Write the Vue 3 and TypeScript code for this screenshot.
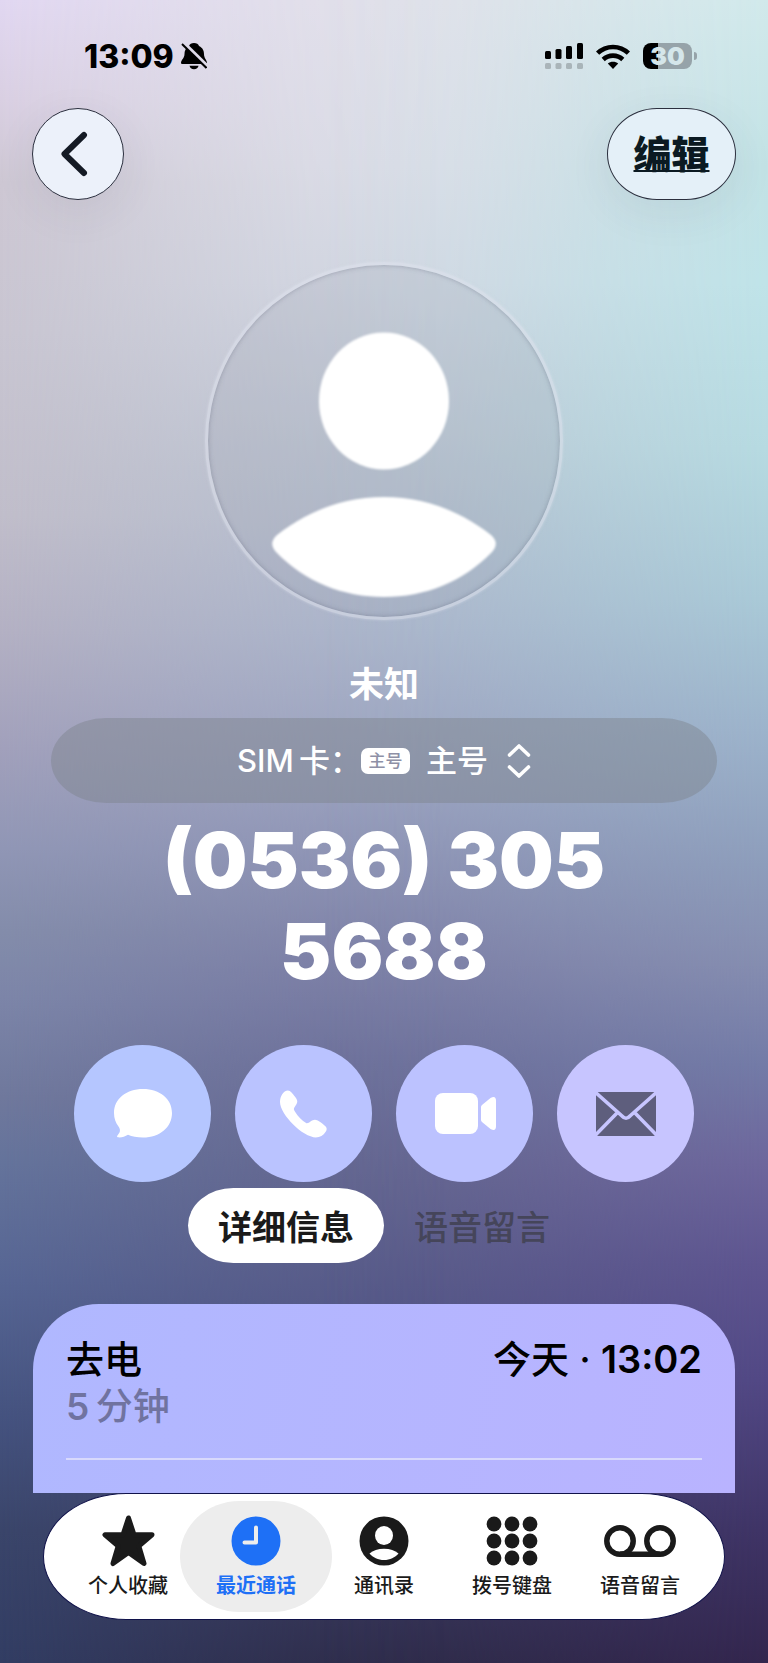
<script setup lang="ts">
import { ref } from 'vue'

interface NavItem {
  id: string
  label: string
}

const tabs: NavItem[] = [
  { id: 'details', label: '详细信息' },
  { id: 'voicemail', label: '语音留言' },
]

const navItems: NavItem[] = [
  { id: 'favorites', label: '个人收藏' },
  { id: 'recents', label: '最近通话' },
  { id: 'contacts', label: '通讯录' },
  { id: 'keypad', label: '拨号键盘' },
  { id: 'voicemail', label: '语音留言' },
]

const keypadDots = [8, 26, 44].flatMap((x) => [8, 25, 42].map((y) => ({ x, y })))

const activeTab = ref('details')
const activeNav = ref('recents')
const sim = ref('main')
</script>

<template>
  <div class="screen">
    <div class="status">
      <div class="status-left">
        <span class="clock">13:09</span>
        <svg width="26" height="28" viewBox="0 0 26 28" aria-hidden="true">
          <mask id="bell-gap">
            <rect width="26" height="28" fill="#fff" />
            <path d="M1.500 0 28 26" stroke="#000" stroke-width="4" />
          </mask>
          <g mask="url(#bell-gap)">
            <path d="M13 1C15.500 1 17.500 2 18 4C22 6 23 9 23 12C23 16 25.500 17.500 26 20.500C26 21.600 25.500 22 24.500 22H1.500C.5 22 0 21.600 0 20.500C.5 17.500 3.500 16 3.500 12C3.500 9 4.500 6 8 4C8.500 2 10.500 1 13 1Z" />
            <path d="M8.500 23.800H17.500C17 26 15.500 27.200 13 27.200S9 26 8.500 23.800Z" />
          </g>
          <path d="M1 2 25.500 26" stroke="#000" stroke-width="2" />
        </svg>
      </div>
      <div class="status-right">
        <svg width="38" height="26" viewBox="0 0 38 26" aria-hidden="true">
          <rect x="0" y="8" width="6" height="8" rx="1.500" />
          <rect x="10.500" y="6" width="6" height="10" rx="1.500" />
          <rect x="21" y="3" width="6" height="13" rx="1.500" />
          <rect x="32" y="0" width="6" height="16" rx="1.500" />
          <g opacity="0.2">
            <rect x="0" y="20" width="6" height="6" rx="1.500" />
            <rect x="10.500" y="20" width="6" height="6" rx="1.500" />
            <rect x="21" y="20" width="6" height="6" rx="1.500" />
            <rect x="32" y="20" width="6" height="6" rx="1.500" />
          </g>
        </svg>
        <svg width="34" height="25" viewBox="0 0 34 25" aria-hidden="true">
          <g fill="none" stroke="#000" stroke-width="4.600">
            <path d="M1.600 9.200C10 .9 24 .9 32.400 9.200" />
            <path d="M7.200 15.500C12.700 10.300 21.300 10.300 26.800 15.500" />
          </g>
          <path d="M17 25 11.800 19.600C14.500 17 19.500 17 22.200 19.600Z" />
        </svg>
        <div class="battery"><span class="battery-body">30</span><span class="battery-tip"></span></div>
      </div>
    </div>

    <header class="header">
      <button class="glass back" type="button" aria-label="返回">
        <svg width="28" height="46" viewBox="0 0 28 46" aria-hidden="true">
          <path d="M24 4 4.500 23 24 42" fill="none" stroke="#141a24" stroke-width="6" stroke-linecap="round" stroke-linejoin="round" />
        </svg>
      </button>
      <button class="glass edit" type="button">编辑</button>
    </header>

    <main class="main">
      <div class="avatar">
        <svg width="230" height="290" viewBox="0 0 230 290" aria-hidden="true">
          <ellipse cx="115" cy="104" rx="65" ry="68.500" fill="#fff" />
          <path d="M8 238C40 213 76 200 115 200S190 213 222 238Q231 246 223 255C194 285 156 300 115 300S36 285 7 255Q-1 246 8 238Z" fill="#fff" />
        </svg>
      </div>

      <h1 class="name">未知</h1>

      <div class="sim">
        <label for="sim">SIM&thinsp;卡：</label>
        <span class="sim-badge">主号</span>
        <select id="sim" v-model="sim" class="sim-select">
          <option value="main">主号</option>
        </select>
        <svg width="24" height="34" viewBox="0 0 24 34" aria-hidden="true">
          <path d="M2.500 11 12 2 21.500 11M2.500 23 12 32 21.500 23" fill="none" stroke="#fff" stroke-width="3.600" stroke-linecap="round" stroke-linejoin="round" />
        </svg>
      </div>

      <p class="phone">(0536) 305 5688</p>

      <div class="actions">
        <button class="action action-message" type="button" aria-label="信息">
          <svg width="58" height="50" viewBox="0 0 58 50" aria-hidden="true">
            <path d="M29 0C46 0 58 10 58 24S46 48.500 29 48.500C23 48.500 18 47.500 14 45.800C11 47.600 7 48.800 4 48.300C2.600 48 3 46.800 3.800 46C6 43.500 7 41 4.500 37.500C1.500 34 0 29 0 24C0 10 12 0 29 0Z" fill="#fff" />
          </svg>
        </button>
        <button class="action action-call" type="button" aria-label="呼叫">
          <svg width="47" height="48" viewBox="0 0 142 144" aria-hidden="true">
            <path d="M24 1C32 1 38 10 46 21C56 34 53 38 43 53C41 57 42 60 46 66C54 80 66 92 80 100C84 101 88 98 92 95C100 89 106 87 114 92C122 97 132 104 138 110C143 115 141 121 138 126C131 137 121 143 108 143C90 143 60 125 40 104C18 82 0 56 0 36C0 18 10 2 24 1Z" fill="#fff" />
          </svg>
        </button>
        <button class="action action-video" type="button" aria-label="视频">
          <svg width="62" height="42" viewBox="0 0 62 42" aria-hidden="true">
            <rect x="1" width="43" height="41" rx="8" fill="#fff" />
            <path d="M48 12 56.500 5Q62 2 62 8V33Q62 39 56.500 36L48 29Q47 28 47 27V14Q47 13 48 12Z" fill="#fff" />
          </svg>
        </button>
        <button class="action action-mail" type="button" aria-label="邮件">
          <svg width="60" height="44" viewBox="0 0 60 44" aria-hidden="true">
            <rect width="60" height="44" rx="2" fill="#5e5e7d" />
            <path d="M-1 0 26 24Q30 28.500 34 24L61 0M-1 43.500 21 21M61 43.500 39 21" fill="none" stroke="#c7c5ff" stroke-width="3.600" />
          </svg>
        </button>
      </div>

      <div class="tabs" role="tablist">
        <button
          v-for="tab in tabs"
          :key="tab.id"
          type="button"
          role="tab"
          class="tab"
          :class="{ 'tab-active': activeTab === tab.id }"
          :aria-selected="activeTab === tab.id"
          @click="activeTab = tab.id"
        >
          {{ tab.label }}
        </button>
      </div>

      <section class="card">
        <div class="call">
          <div class="call-head">
            <span>去电</span>
            <span>今天 · <span class="digits">13:02</span></span>
          </div>
          <div class="call-length"><span class="digits">5</span>&thinsp;分钟</div>
        </div>
      </section>
    </main>

    <nav class="nav">
      <button
        v-for="item in navItems"
        :key="item.id"
        type="button"
        class="nav-item"
        :class="{ 'nav-active': activeNav === item.id }"
        @click="activeNav = item.id"
      >
        <span class="nav-icon">
          <svg v-if="item.id === 'favorites'" width="53" height="52" viewBox="0 0 53 52" aria-hidden="true">
            <path d="M26.500 3 32 19.800H50L36.800 31 42 48.500 26.500 37.500 11 48.500 16.200 31 3 19.800H21Z" fill="currentColor" stroke="currentColor" stroke-width="5" stroke-linejoin="round" />
          </svg>
          <svg v-else-if="item.id === 'recents'" width="50" height="50" viewBox="0 0 50 50" aria-hidden="true">
            <circle cx="25" cy="25" r="24.500" fill="currentColor" />
            <path d="M25 11.500V26.500H13.500" fill="none" stroke="#ededed" stroke-width="4" stroke-linecap="round" stroke-linejoin="round" />
          </svg>
          <svg v-else-if="item.id === 'contacts'" width="50" height="50" viewBox="0 0 50 50" aria-hidden="true">
            <circle cx="25" cy="25" r="24.500" fill="currentColor" />
            <ellipse cx="25" cy="19.500" rx="9" ry="9.500" fill="#fff" />
            <path d="M10.500 37.500C14 34.500 19 32.800 25 32.800S36 34.500 39.500 37.500C36 41.500 31 44 25 44S14 41.500 10.500 37.500Z" fill="#fff" />
          </svg>
          <svg v-else-if="item.id === 'keypad'" width="52" height="50" viewBox="0 0 52 50" aria-hidden="true">
            <circle v-for="dot in keypadDots" :key="`${dot.x}-${dot.y}`" :cx="dot.x" :cy="dot.y" r="7.400" fill="currentColor" />
          </svg>
          <svg v-else width="72" height="32" viewBox="0 0 72 32" aria-hidden="true">
            <g fill="none" stroke="currentColor" stroke-width="5.500">
              <circle cx="16" cy="16" r="13.200" />
              <circle cx="56" cy="16" r="13.200" />
              <path d="M16 29.200H56" />
            </g>
          </svg>
        </span>
        <span class="nav-label">{{ item.label }}</span>
      </button>
    </nav>
  </div>
</template>

<style>
html,
body {
  margin: 0;
}
</style>

<style scoped>
* {
  box-sizing: border-box;
}

.screen {
  position: relative;
  z-index: 0;
  min-height: 100vh;
  padding-bottom: 43px;
  overflow: hidden;
  font-family: Inter, 'Noto Sans CJK SC', sans-serif;
  color: #fff;
  background: linear-gradient(
    180deg,
    #e2e1ea 0%,
    #dcdee8 10%,
    #d3d8e3 17%,
    #bcc5d3 28%,
    #abb5cb 38%,
    #989fbd 48%,
    #7d80a7 58%,
    #6e719b 64%,
    #63658f 71%,
    #555887 79%,
    #404169 90%,
    #2f2d4b 100%
  );
}

.screen::before,
.screen::after {
  content: '';
  position: absolute;
  inset: 0;
  z-index: -1;
}

.screen::before {
  background: linear-gradient(
    180deg,
    #e1d7f1 0%,
    #d9cfe2 6%,
    #cdc7d3 11%,
    #c8c5d1 20%,
    #c0bdca 31%,
    #b3b0c3 38%,
    #a1a0bb 45%,
    #9096b5 51%,
    #838caa 56%,
    #7c85a8 60%,
    #6f789c 66%,
    #64739b 70%,
    #566593 77%,
    #455380 85%,
    #3a456a 92%,
    #323d63 100%
  );
  mask-image: linear-gradient(90deg, #000 0%, rgba(0, 0, 0, 0.5) 22%, rgba(0, 0, 0, 0.15) 40%, transparent 58%);
}

.screen::after {
  background: linear-gradient(
    180deg,
    #d1e9eb 0%,
    #c2e2e5 10%,
    #bfe3e8 17%,
    #b6dae1 27%,
    #a9c9d7 36%,
    #9cb3cb 44%,
    #8d9dbb 52%,
    #858db0 58%,
    #737ba7 64%,
    #6d669c 70%,
    #5e5590 76%,
    #524885 83%,
    #3f3466 92%,
    #33264e 100%
  );
  mask-image: linear-gradient(270deg, #000 0%, rgba(0, 0, 0, 0.6) 22%, rgba(0, 0, 0, 0.2) 40%, transparent 58%);
}

button,
select {
  margin: 0;
  padding: 0;
  border: 0;
  font: inherit;
  color: inherit;
  cursor: pointer;
}

svg {
  display: block;
  flex: none;
}

.status {
  display: flex;
  justify-content: space-between;
  align-items: center;
  padding: 32px 71px 28px 84px;
  color: #000;
}

.status-left,
.status-right {
  display: flex;
  align-items: center;
  height: 48px;
}

.status-left {
  gap: 7px;
}

.status-right {
  gap: 13px;
}

.clock {
  font-size: 32px;
  font-weight: 800;
}

.battery {
  display: flex;
  align-items: center;
  gap: 2px;
}

.battery-body {
  width: 49px;
  height: 26px;
  border-radius: 8px;
  background: linear-gradient(90deg, #000 31%, #96a3a9 31%);
  color: #d5e6ea;
  font-size: 25px;
  line-height: 27px;
  font-weight: 900;
  text-align: center;
}

.battery-tip {
  width: 3px;
  height: 8px;
  border-radius: 0 4px 4px 0;
  background: #96a3a9;
}

.header {
  display: flex;
  justify-content: space-between;
  padding: 0 32px;
}

.glass {
  display: flex;
  align-items: center;
  justify-content: center;
  height: 92px;
  border: 1px solid #2b2f3e;
  border-radius: 46px;
  background: #ecf1fa;
  box-shadow: 0 12px 44px rgba(60, 70, 90, 0.08);
}

.back {
  width: 92px;
  padding-right: 8px;
}

.edit {
  width: 129px;
  padding-bottom: 5px;
  border-radius: 50px / 46px;
  background: #e4f0f8;
  color: #0b1a22;
  font-size: 38px;
  font-weight: 900;
  text-decoration: underline;
  text-decoration-thickness: 2px;
  text-decoration-skip-ink: none;
  text-underline-offset: 2px;
}

.main {
  display: flex;
  flex-direction: column;
  align-items: center;
  padding: 62px 33px 0;
}

.avatar {
  display: flex;
  justify-content: center;
  width: 358px;
  height: 358px;
  padding-top: 32px;
  border: 3px solid rgba(222, 226, 236, 0.55);
  border-radius: 50%;
  background: rgba(150, 155, 170, 0.2);
  background-clip: padding-box;
  box-shadow: inset 0 0 5px rgba(90, 95, 115, 0.4), 0 0 3px rgba(225, 230, 240, 0.5);
}

.avatar svg {
  overflow: visible;
  filter: blur(1px);
}

.name {
  margin: 42px 0 12px;
  font-size: 35px;
  line-height: 44px;
  font-weight: 700;
}

.sim {
  display: flex;
  align-items: center;
  align-self: stretch;
  justify-content: center;
  height: 85px;
  margin: 0 18px;
  border-radius: 56px / 43px;
  background: rgba(125, 130, 140, 0.45);
  font-size: 31px;
  line-height: 44px;
  font-weight: 500;
}

.sim-badge {
  width: 49px;
  height: 26px;
  margin-right: 16px;
  border-radius: 7px;
  background: #fff;
  color: #8e90a6;
  font-size: 17px;
  line-height: 26px;
  text-align: center;
}

.sim-select {
  height: 44px;
  margin-right: 19px;
  appearance: none;
  background: transparent;
}

.phone {
  max-width: 520px;
  margin: 12px 0 48px;
  font-size: 77px;
  line-height: 91px;
  font-weight: 900;
  text-align: center;
}

.actions {
  display: flex;
  gap: 24px;
}

.action {
  display: flex;
  align-items: center;
  justify-content: center;
  width: 137px;
  height: 137px;
  border-radius: 50%;
}

.action-message {
  background: #b5c6ff;
}

.action-call {
  background: #bac3ff;
}

.action-video {
  background: #bcc2ff;
}

.action-mail {
  background: #c7c5ff;
}

.tabs {
  display: grid;
  grid-template-columns: 1fr 1fr;
  margin: 6px 0 41px;
}

.tab {
  height: 75px;
  padding: 0 30px;
  border-radius: 46px / 38px;
  background: transparent;
  color: #45455a;
  font-size: 34px;
  font-weight: 500;
}

.tab-active {
  background: #fff;
  color: #1a1a1a;
  font-weight: 700;
}

.card {
  align-self: stretch;
  padding: 31px 33px 33px;
  border-radius: 66px 66px 0 0;
  background: linear-gradient(100deg, #b0b8ff, #b9b3ff);
  color: #000;
}

.call {
  padding-bottom: 27px;
  border-bottom: 2px solid #d8d9fc;
  font-size: 38px;
  line-height: 48px;
  font-weight: 500;
}

.call-head {
  display: flex;
  justify-content: space-between;
}

.call-length {
  color: #7073a0;
  font-size: 37px;
}

.digits {
  font-weight: 600;
}

.nav {
  display: grid;
  grid-template-columns: repeat(5, 1fr);
  margin: 0 43px;
  padding: 7px 20px;
  border: 1px solid #10124a;
  border-radius: 84px / 64px;
  background: #fff;
  color: #1a1a1a;
}

.nav-item {
  position: relative;
  z-index: 0;
  display: flex;
  flex-direction: column;
  align-items: center;
  height: 111px;
  padding-top: 14px;
  background: transparent;
}

.nav-active {
  color: #1e70f6;
}

.nav-active::before {
  content: '';
  position: absolute;
  inset: 0 -12px;
  z-index: -1;
  border-radius: 60px / 56px;
  background: #ededed;
}

.nav-icon {
  display: flex;
  align-items: center;
  height: 52px;
}

.nav-label {
  margin-top: 5px;
  font-size: 20px;
  line-height: 28px;
  font-weight: 500;
}

.nav-active .nav-label {
  font-weight: 700;
}
</style>
